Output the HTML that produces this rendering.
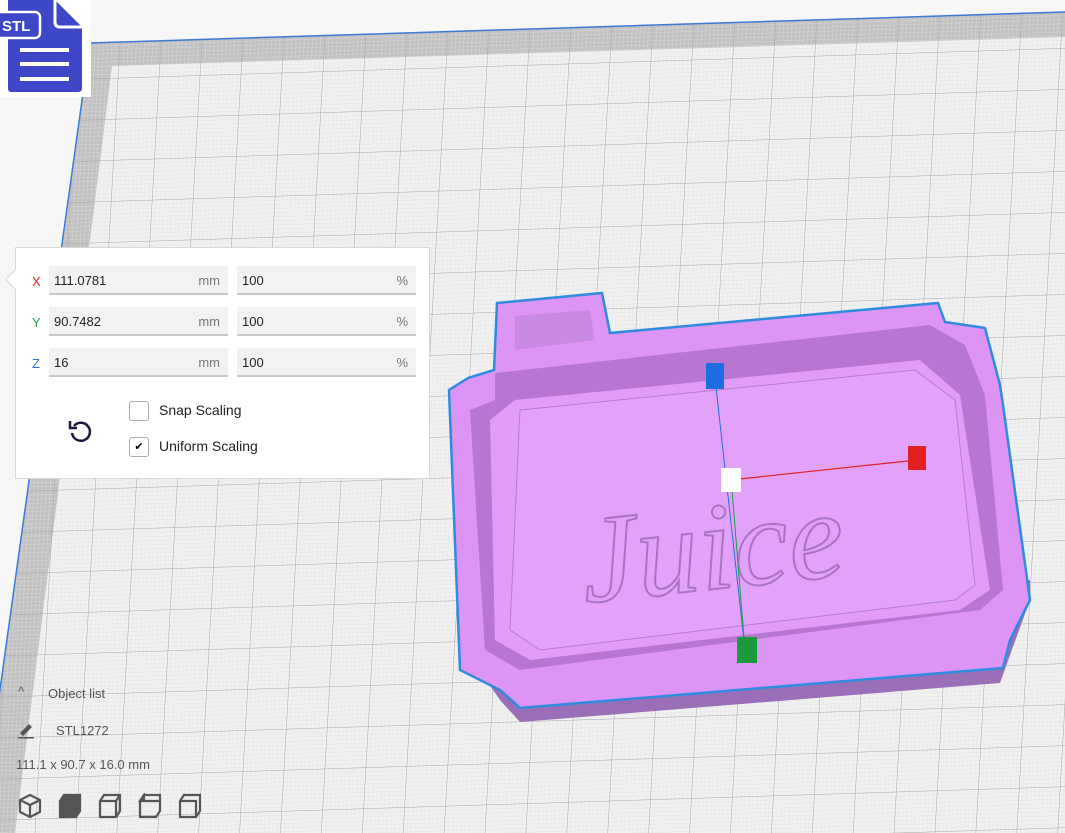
<!DOCTYPE html>
<html><head><meta charset="utf-8"><style>
body{margin:0;width:1065px;height:833px;overflow:hidden;background:#f7f7f7;font-family:"Liberation Sans",sans-serif;position:relative}
.panel{position:absolute;left:15px;top:247px;width:415px;height:232px;background:#fff;border:1px solid #d8d8d8;box-sizing:border-box}
.row{position:absolute;left:0;height:30px;width:415px}
.lab{position:absolute;left:16px;top:8px;font-size:13px}
.f{position:absolute;top:0;height:29px;background:#f2f2f2;border-bottom:2px solid #c8c8c8;font-size:13px;color:#222;box-sizing:border-box;padding:7px 5px}
.f span{position:absolute;right:8px;top:7px;color:#777}
.cb{position:absolute;left:113px;width:18px;height:18px;border:1px solid #aaa;border-radius:3px;background:#fff}
.cl{position:absolute;left:143px;font-size:14px;color:#222}
.bt{position:absolute;font-size:13px;color:#555}
</style></head><body>
<svg width="1065" height="833" style="position:absolute;left:0;top:0">
<defs>
<pattern id="mn" width="4.1" height="4.1" patternUnits="userSpaceOnUse" patternTransform="rotate(-1.8) skewX(-5)"><path d="M4.1 0V4.1H0" fill="none" stroke="#e0e0e0" stroke-width="0.6"/></pattern>
<pattern id="mj" width="41" height="41" patternUnits="userSpaceOnUse" patternTransform="rotate(-1.8) skewX(-5)"><path d="M41 0V41H0" fill="none" stroke="#a5a5a5" stroke-width="1"/></pattern>
</defs>
<polygon points="90,43 1065,12 1065,833 -20,833" fill="#c2c2c2"/>
<polygon points="112,66 1065,37 1065,833 15,833" fill="#f1f1f1"/>
<polygon points="90,43 1065,12 1065,833 -20,833" fill="url(#mn)"/>
<polygon points="90,43 1065,12 1065,833 -20,833" fill="url(#mj)"/>
<polyline points="-20,833 90,43 1065,12" fill="none" stroke="#3a7ad8" stroke-width="1.5"/>
<!-- object -->
<polygon points="458,640 500,700 520,722 1000,683 1010,655 1030,600 1030,580 460,620" fill="#9a6fb8"/>
<polygon points="497,303 602,293 610,333 938,303 945,322 985,328 1000,385 1003,405 1030,600 1010,640 1003,668 520,708 500,690 460,670 449,390 468,378 494,370" fill="#dd95f5" stroke="#2f8be0" stroke-width="2.5"/>
<polygon points="515,316 590,310 595,340 515,350" fill="#c98ae3"/>
<polygon points="495,373 930,325 965,345 985,395 1003,590 980,610 520,670 485,650 470,410 495,400" fill="#b676d2"/>
<polygon points="515,400 920,360 960,395 990,590 960,610 530,660 495,640 490,420" fill="#e19cf8"/>
<polygon points="520,410 915,370 955,400 975,585 955,600 540,650 510,630" fill="#e3a2fa" stroke="#b37ccb" stroke-width="1"/>
<text x="575" y="590" font-family="Liberation Serif,serif" font-style="italic" font-size="125" fill="none" stroke="#a874c0" stroke-width="2" transform="rotate(-6 700 500)">Juice</text>
<line x1="715" y1="378" x2="745" y2="650" stroke="#2a6fe0" stroke-width="1"/>
<line x1="730" y1="480" x2="917" y2="460" stroke="#e02020" stroke-width="1.2"/>
<line x1="732" y1="490" x2="745" y2="650" stroke="#1aa040" stroke-width="1"/>
<rect x="706" y="363" width="18" height="26" fill="#1e6de0"/>
<rect x="908" y="446" width="18" height="24" fill="#e02020"/>
<rect x="721" y="468" width="20" height="24" fill="#fff"/>
<rect x="737" y="637" width="20" height="26" fill="#1a9a3a"/>
</svg>
<!-- STL icon -->
<div style="position:absolute;left:0;top:0;width:91px;height:97px;background:#fff"></div>
<svg width="91" height="97" style="position:absolute;left:0;top:0">
<path d="M8 0H55L82 27V88Q82 92 78 92H11Q8 92 8 88Z" fill="#3f47c9"/>
<path d="M55 0V22Q55 27 60 27H82" fill="none" stroke="#fff" stroke-width="3"/>
<rect x="-4" y="12" width="44" height="26" rx="5" fill="#3f47c9" stroke="#fff" stroke-width="2.5"/>
<text x="2" y="31" font-family="Liberation Sans" font-weight="bold" font-size="15" fill="#fff">STL</text>
<rect x="20" y="48" width="49" height="4" fill="#fff"/><rect x="20" y="62" width="49" height="4" fill="#fff"/><rect x="20" y="77" width="49" height="4" fill="#fff"/>
</svg>
<div class="panel">
<div style="position:absolute;left:-8px;top:24px;width:14px;height:14px;background:#fff;border-left:1px solid #d8d8d8;border-bottom:1px solid #d8d8d8;transform:rotate(45deg)"></div>
<div class="row" style="top:18px"><div class="lab" style="color:#e02020">X</div><div class="f" style="left:33px;width:179px">111.0781<span>mm</span></div><div class="f" style="left:221px;width:179px">100<span>%</span></div></div>
<div class="row" style="top:59px"><div class="lab" style="color:#2aa050">Y</div><div class="f" style="left:33px;width:179px">90.7482<span>mm</span></div><div class="f" style="left:221px;width:179px">100<span>%</span></div></div>
<div class="row" style="top:100px"><div class="lab" style="color:#2a70e0">Z</div><div class="f" style="left:33px;width:179px">16<span>mm</span></div><div class="f" style="left:221px;width:179px">100<span>%</span></div></div>
<div class="cb" style="top:153px"></div><div class="cl" style="top:154px">Snap Scaling</div>
<div class="cb" style="top:189px;font-size:11px;text-align:center;line-height:18px">✔</div><div class="cl" style="top:190px">Uniform Scaling</div>
<svg width="30" height="30" style="position:absolute;left:50px;top:168px"><path d="M8 10A9 9 0 1 1 6 17" fill="none" stroke="#1a1a40" stroke-width="2.5"/><path d="M4 5V12H11" fill="none" stroke="#1a1a40" stroke-width="2.5"/></svg>
</div>
<div class="bt" style="left:18px;top:684px">^</div>
<div class="bt" style="left:48px;top:686px">Object list</div>
<svg width="20" height="20" style="position:absolute;left:17px;top:721px"><path d="M3 12L12 3L15 6L6 15Z" fill="#555"/><rect x="1" y="16" width="16" height="1.5" fill="#555"/></svg>
<div class="bt" style="left:56px;top:723px">STL1272</div>
<div class="bt" style="left:16px;top:757px">111.1 x 90.7 x 16.0 mm</div>
<svg width="200" height="30" style="position:absolute;left:18px;top:793px" fill="none" stroke="#555" stroke-width="2.2">
<path d="M12 2L22 7V19L12 24L2 19V7ZM2 7L12 12L22 7M12 12V24"/>
<g transform="translate(40,0)"><path d="M6 2H22V18L18 24H2V8Z" fill="#555"/></g>
<g transform="translate(80,0)"><path d="M6 2H22V18L18 24H2V8ZM2 8H18V24M18 8L22 2"/></g>
<g transform="translate(120,0)"><path d="M6 2H22V18L18 24H2V8ZM6 8H22" /><path d="M2 8L6 2V8Z" fill="#555"/></g>
<g transform="translate(160,0)"><path d="M6 2H22V18L18 24H2V8ZM2 8H18V24"/></g>
</svg>
</body></html>
